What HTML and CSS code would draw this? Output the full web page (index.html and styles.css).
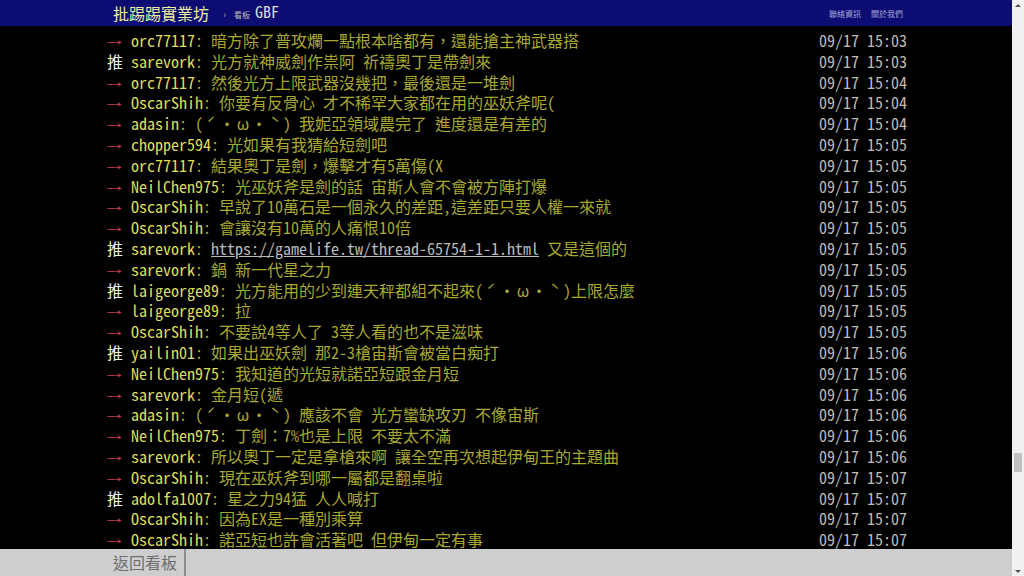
FILE: index.html
```html
<!DOCTYPE html>
<html lang="zh-Hant-TW">
  <head>
    <meta charset="UTF-8" />
    <meta name="viewport" content="width=device-width, initial-scale=1.0" />
    <title>[閒聊] 奧丁 - 看板 GBF - 批踢踢實業坊</title>
    <link rel="stylesheet" href="styles.css">
  </head>
  <body>
    <div class="page">
      <div class="main">
        <div id="topbar">
          <a id="logo" href="#">批踢踢實業坊</a>
          <span class="sep">›</span>
          <a class="board" href="#"><span class="board-label">看板</span>GBF</a>
          <div class="right">
            <a href="#">聯絡資訊</a>
            <a href="#">關於我們</a>
          </div>
        </div>

        <div id="main-content">
          <div class="push"><span class="push-tag f1">→</span><span class="push-userid">orc77117</span><span class="push-content">: 暗方除了普攻爛一點根本啥都有，還能搶主神武器搭</span><span class="push-ipdatetime">09/17 15:03</span></div>
          <div class="push"><span class="push-tag">推</span><span class="push-userid">sarevork</span><span class="push-content">: 光方就神威劍作祟阿 祈禱奧丁是帶劍來</span><span class="push-ipdatetime">09/17 15:03</span></div>
          <div class="push"><span class="push-tag f1">→</span><span class="push-userid">orc77117</span><span class="push-content">: 然後光方上限武器沒幾把，最後還是一堆劍</span><span class="push-ipdatetime">09/17 15:04</span></div>
          <div class="push"><span class="push-tag f1">→</span><span class="push-userid">OscarShih</span><span class="push-content">: 你要有反骨心 才不稀罕大家都在用的巫妖斧呢(</span><span class="push-ipdatetime">09/17 15:04</span></div>
          <div class="push"><span class="push-tag f1">→</span><span class="push-userid">adasin</span><span class="push-content">: (<span class="w">ˊ</span>・<span class="w">ω</span>・<span class="w">ˋ</span>) 我妮亞領域農完了 進度還是有差的</span><span class="push-ipdatetime">09/17 15:04</span></div>
          <div class="push"><span class="push-tag f1">→</span><span class="push-userid">chopper594</span><span class="push-content">: 光如果有我猜給短劍吧</span><span class="push-ipdatetime">09/17 15:05</span></div>
          <div class="push"><span class="push-tag f1">→</span><span class="push-userid">orc77117</span><span class="push-content">: 結果奧丁是劍，爆擊才有5萬傷(X</span><span class="push-ipdatetime">09/17 15:05</span></div>
          <div class="push"><span class="push-tag f1">→</span><span class="push-userid">NeilChen975</span><span class="push-content">: 光巫妖斧是劍的話 宙斯人會不會被方陣打爆</span><span class="push-ipdatetime">09/17 15:05</span></div>
          <div class="push"><span class="push-tag f1">→</span><span class="push-userid">OscarShih</span><span class="push-content">: 早說了10萬石是一個永久的差距,這差距只要人權一來就</span><span class="push-ipdatetime">09/17 15:05</span></div>
          <div class="push"><span class="push-tag f1">→</span><span class="push-userid">OscarShih</span><span class="push-content">: 會讓沒有10萬的人痛恨10倍</span><span class="push-ipdatetime">09/17 15:05</span></div>
          <div class="push"><span class="push-tag">推</span><span class="push-userid">sarevork</span><span class="push-content">: <a href="#">https://gamelife.tw/thread-65754-1-1.html</a> 又是這個的</span><span class="push-ipdatetime">09/17 15:05</span></div>
          <div class="push"><span class="push-tag f1">→</span><span class="push-userid">sarevork</span><span class="push-content">: 鍋 新一代星之力</span><span class="push-ipdatetime">09/17 15:05</span></div>
          <div class="push"><span class="push-tag">推</span><span class="push-userid">laigeorge89</span><span class="push-content">: 光方能用的少到連天秤都組不起來(<span class="w">ˊ</span>・<span class="w">ω</span>・<span class="w">ˋ</span>)上限怎麼</span><span class="push-ipdatetime">09/17 15:05</span></div>
          <div class="push"><span class="push-tag f1">→</span><span class="push-userid">laigeorge89</span><span class="push-content">: 拉</span><span class="push-ipdatetime">09/17 15:05</span></div>
          <div class="push"><span class="push-tag f1">→</span><span class="push-userid">OscarShih</span><span class="push-content">: 不要說4等人了 3等人看的也不是滋味</span><span class="push-ipdatetime">09/17 15:05</span></div>
          <div class="push"><span class="push-tag">推</span><span class="push-userid">yailin01</span><span class="push-content">: 如果出巫妖劍 那2-3槍宙斯會被當白痴打</span><span class="push-ipdatetime">09/17 15:06</span></div>
          <div class="push"><span class="push-tag f1">→</span><span class="push-userid">NeilChen975</span><span class="push-content">: 我知道的光短就諾亞短跟金月短</span><span class="push-ipdatetime">09/17 15:06</span></div>
          <div class="push"><span class="push-tag f1">→</span><span class="push-userid">sarevork</span><span class="push-content">: 金月短(遞</span><span class="push-ipdatetime">09/17 15:06</span></div>
          <div class="push"><span class="push-tag f1">→</span><span class="push-userid">adasin</span><span class="push-content">: (<span class="w">ˊ</span>・<span class="w">ω</span>・<span class="w">ˋ</span>) 應該不會 光方蠻缺攻刃 不像宙斯</span><span class="push-ipdatetime">09/17 15:06</span></div>
          <div class="push"><span class="push-tag f1">→</span><span class="push-userid">NeilChen975</span><span class="push-content">: 丁劍<span class="fw">：</span>7%也是上限 不要太不滿</span><span class="push-ipdatetime">09/17 15:06</span></div>
          <div class="push"><span class="push-tag f1">→</span><span class="push-userid">sarevork</span><span class="push-content">: 所以奧丁一定是拿槍來啊 讓全空再次想起伊甸王的主題曲</span><span class="push-ipdatetime">09/17 15:06</span></div>
          <div class="push"><span class="push-tag f1">→</span><span class="push-userid">OscarShih</span><span class="push-content">: 現在巫妖斧到哪一屬都是翻桌啦</span><span class="push-ipdatetime">09/17 15:07</span></div>
          <div class="push"><span class="push-tag">推</span><span class="push-userid">adolfa1007</span><span class="push-content">: 星之力94猛 人人喊打</span><span class="push-ipdatetime">09/17 15:07</span></div>
          <div class="push"><span class="push-tag f1">→</span><span class="push-userid">OscarShih</span><span class="push-content">: 因為EX是一種別乘算</span><span class="push-ipdatetime">09/17 15:07</span></div>
          <div class="push"><span class="push-tag f1">→</span><span class="push-userid">OscarShih</span><span class="push-content">: 諾亞短也許會活著吧 但伊甸一定有事</span><span class="push-ipdatetime">09/17 15:07</span></div>
        </div>

        <div id="action-bar">
          <a class="btn" href="#">返回看板</a>
        </div>
      </div>

      <div class="scrollbar">
        <div class="arrow up"></div>
        <div class="track">
          <div class="thumb"></div>
        </div>
        <div class="arrow down"></div>
      </div>
    </div>
  </body>
</html>
```

FILE: styles.css
```css
body {
  margin: 0;
  background: #000;
  color: #bbb;
  font-family: "Noto Sans CJK TC", "Noto Sans CJK SC", sans-serif;
  font-feature-settings: "hwid";
  overflow: hidden;
}

a {
  text-decoration: none;
  color: inherit;
}

.page {
  display: flex;
  height: 576px;
}

.main {
  width: 1012px;
  display: flex;
  flex-direction: column;
}

/* top bar */
#topbar {
  height: 26px;
  flex-shrink: 0;
  background: #0c0c72;
  display: flex;
  align-items: center;
  padding: 0 109px 0 113px;
  white-space: nowrap;
}

#logo {
  font-size: 16px;
  color: #eeeea0;
  line-height: 26px;
}

.sep {
  color: #999;
  font-size: 10px;
  margin: 0 6px 0 14px;
}

.board {
  color: #ddd;
  font-size: 16px;
  line-height: 26px;
}

.board-label {
  font-size: 8px;
  color: #bbb;
  margin: 0 5px 0 2px;
}

.right {
  margin-left: auto;
  display: flex;
  gap: 10px;
}

.right a {
  font-size: 8px;
  color: #a4a4d8;
}

/* pushes */
#main-content {
  flex: 1;
  overflow: hidden;
  padding: 4px 0 0 107px;
}

.push {
  width: 800px;
  display: flex;
  font-size: 16px;
  line-height: 20.8px;
  height: 20.8px;
  white-space: pre;
}

.push-tag {
  color: #f2f2f2;
  width: 24px;
  flex-shrink: 0;
}

.push-tag.f1 {
  color: #c8384a;
  font-family: "Liberation Serif", serif;
  font-feature-settings: normal;
  transform: translateX(-4.5px) scaleX(1.5);
  transform-origin: 0 0;
}

.push-userid {
  color: #dede5c;
}

.push-content {
  color: #a8a830;
}

.push-content a {
  color: #bbb;
  text-decoration: underline;
}

.push-content .w {
  display: inline-block;
  width: 16px;
  text-align: center;
  font-feature-settings: normal;
}

.push-content .fw {
  font-feature-settings: normal;
}

.push-ipdatetime {
  margin-left: auto;
  color: #bbb;
}

/* bottom bar */
#action-bar {
  height: 27px;
  flex-shrink: 0;
  background: #cecece;
  display: flex;
  padding-left: 113px;
}

.btn {
  font-size: 16px;
  line-height: 27px;
  color: #6e6e6e;
  padding-right: 7px;
  border-right: 2px solid #8c8c8c;
}

/* scrollbar */
.scrollbar {
  width: 12px;
  background: #f1f1f1;
  display: flex;
  flex-direction: column;
}

.arrow {
  height: 10px;
  display: flex;
  align-items: center;
  justify-content: center;
}

.arrow::before {
  content: "";
  border-left: 3px solid transparent;
  border-right: 3px solid transparent;
}

.arrow.up::before {
  border-bottom: 3px solid #505050;
}

.arrow.down::before {
  border-top: 3px solid #505050;
}

.track {
  flex: 1;
  padding-top: 443px;
}

.thumb {
  width: 8px;
  height: 19px;
  margin-left: 2px;
  background: #c1c1c1;
}
```
